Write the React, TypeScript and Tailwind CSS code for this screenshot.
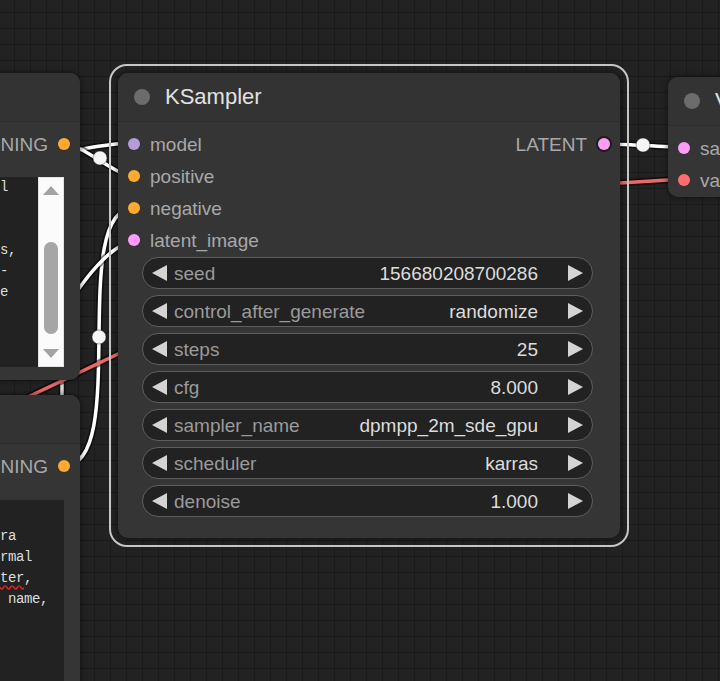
import React from "react"

const SANS = "font-['Liberation_Sans',Arial,sans-serif]"
const MONO = "font-['Liberation_Mono','DejaVu_Sans_Mono',monospace]"

type Slot = { label: string; dot: string }

const inputs: Slot[] = [
  { label: "model", dot: "bg-[#b39ddb]" },
  { label: "positive", dot: "bg-[#ffa931]" },
  { label: "negative", dot: "bg-[#ffa931]" },
  { label: "latent_image", dot: "bg-[#ff9cf9]" },
]

const widgets = [
  { label: "seed", value: "156680208700286" },
  { label: "control_after_generate", value: "randomize" },
  { label: "steps", value: "25" },
  { label: "cfg", value: "8.000" },
  { label: "sampler_name", value: "dpmpp_2m_sde_gpu" },
  { label: "scheduler", value: "karras" },
  { label: "denoise", value: "1.000" },
]

// links are drawn under the nodes, like the canvas does
const links = [
  { d: "M 40 158 C 80 150, 100 144, 134 143", color: "#ffffff" },
  { d: "M 64 144 C 83 144, 115 176, 134 176", color: "#ffffff" },
  { d: "M 64 466 C 131 466, 67 208, 134 208", color: "#ffffff" },
  { d: "M 30 360 C 60 320, 95 250, 134 240", color: "#ffffff" },
  { d: "M 62 366 L 62 410", color: "#d8d8d8" },
  { d: "M -20 420 L 118 354 C 300 270, 500 186, 620 183 L 684 179", color: "#ee6868" },
  { d: "M 604 144 C 624 144, 664 147, 684 147", color: "#ffffff" },
]

const midpoints = [
  [100, 158],
  [99, 337],
  [643, 145],
]

function Canvas() {
  return (
    <svg className="absolute inset-0" width="720" height="681">
      <defs>
        <pattern id="grid" x="14" y="12" width="16" height="16" patternUnits="userSpaceOnUse">
          <path d="M 0 0 L 16 0 M 0 0 L 0 16" stroke="#1a1a1a" strokeWidth="2" fill="none" />
        </pattern>
      </defs>
      <rect width="720" height="681" fill="#222222" />
      <rect width="720" height="681" fill="url(#grid)" />
      {links.map((l, i) => (
        <g key={i}>
          <path d={l.d} stroke="#000" strokeOpacity="0.5" strokeWidth="7" fill="none" />
          <path d={l.d} stroke={l.color} strokeWidth="3.5" fill="none" />
        </g>
      ))}
      {midpoints.map(([x, y], i) => (
        <circle key={i} cx={x} cy={y} r="7" fill="#f5f5f5" stroke="#000" strokeOpacity="0.35" strokeWidth="1" />
      ))}
    </svg>
  )
}

function ArrowLeft() {
  return (
    <svg width="15" height="16" viewBox="0 0 15 16" className="shrink-0">
      <path d="M15 0 L15 16 L0 8 Z" fill="#d4d4d4" />
    </svg>
  )
}

function ArrowRight() {
  return (
    <svg width="15" height="16" viewBox="0 0 15 16" className="shrink-0">
      <path d="M0 0 L0 16 L15 8 Z" fill="#d4d4d4" />
    </svg>
  )
}

function Widget({ label, value }: { label: string; value: string }) {
  return (
    <div className="h-8 rounded-full border border-[#5e5e5e] bg-[#222] flex items-center pl-[9px] pr-[9px] text-[19px] leading-none">
      <ArrowLeft />
      <span className="ml-[7px] text-[#9a9a9a]">{label}</span>
      <span className="flex-1" />
      <span className="text-[#dcdcdc]">{value}</span>
      <span className="w-[30px]" />
      <ArrowRight />
    </div>
  )
}

function TitleBar({ title }: { title: string }) {
  return (
    <div className="h-[49px] shrink-0 flex items-center pl-4 bg-[#333] border-b border-[#2c2c2c] rounded-t-[10px]">
      <span className="w-4 h-4 rounded-full bg-[#6c6c6c]" />
      <span className="ml-[15px] text-[22px] leading-none text-[#e2e2e2] whitespace-nowrap">{title}</span>
    </div>
  )
}

function KSampler() {
  return (
    <div className="absolute left-[109px] top-[64px] w-[520px] h-[483px] rounded-[18px] border-2 border-[#c6c6c6] p-[7px]">
      <div className="h-full rounded-[10px] bg-[#353535] flex flex-col shadow-[0_0_6px_rgba(0,0,0,0.6)]">
        <TitleBar title="KSampler" />
        <div className="pt-[6px] flex justify-between text-[19px] leading-none">
          <div className="flex flex-col">
            {inputs.map((s) => (
              <div key={s.label} className="h-8 flex items-center pl-[10px] gap-[10px]">
                <span className={`w-3 h-3 rounded-full ${s.dot}`} />
                <span className="text-[#a8a8a8]">{s.label}</span>
              </div>
            ))}
          </div>
          <div className="flex flex-col">
            <div className="h-8 flex items-center pr-[10px] gap-[11px]">
              <span className="text-[#a8a8a8]">LATENT</span>
              <span className="w-3 h-3 rounded-full bg-[#ff9cf9] ring-2 ring-[#1e1e1e]" />
            </div>
          </div>
        </div>
        <div className="pt-px pl-6 pr-[27px] flex flex-col gap-[6px]">
          {widgets.map((w) => (
            <Widget key={w.label} label={w.label} value={w.value} />
          ))}
        </div>
      </div>
    </div>
  )
}

function Output({ label }: { label: string }) {
  return (
    <div className="pt-[6px]">
      <div className="h-8 flex items-center justify-end pr-[10px] gap-[10px] text-[19px] leading-none">
        <span className="text-[#a8a8a8]">{label}</span>
        <span className="w-3 h-3 rounded-full bg-[#ffa931]" />
      </div>
    </div>
  )
}

const upperLines = [
  { t: "1girl", cls: "pr-[30px]" },
  { t: "", cls: "" },
  { t: "", cls: "" },
  { t: "flowers,", cls: "pr-[22px]" },
  { t: "semi-", cls: "pr-[30px]" },
  { t: "blue", cls: "pr-[30px]" },
  { t: "", cls: "" },
  { t: "", cls: "" },
  { t: "", cls: "" },
]

function UpperPrompt() {
  return (
    <div className="absolute left-[-400px] top-[73px] w-[480px] h-[307px] rounded-[10px] bg-[#353535] flex flex-col shadow-[0_0_6px_rgba(0,0,0,0.6)]">
      <TitleBar title="CLIP Text Encode (Prompt)" />
      <Output label="CONDITIONING" />
      <div className="mt-[17px] ml-[10px] mr-4 h-[190px] bg-[#222] flex">
        <div className={`flex-1 overflow-hidden ${MONO} text-[14px] tracking-[-0.4px] leading-[21px] text-[#dedede]`}>
          {upperLines.map((l, i) => (
            <div key={i} className={`h-[21px] whitespace-pre text-right ${l.cls}`}>
              {l.t}
            </div>
          ))}
        </div>
        <div className="w-[26px] bg-[#fbfbfb] border border-[#e2e2e2] flex flex-col items-center pt-[8px] pb-[8px]">
          <svg width="16" height="9" viewBox="0 0 16 9">
            <path d="M8 0 L16 9 L0 9 Z" fill="#a3a3a3" />
          </svg>
          <div className="mt-[47px] w-[14px] h-[92px] rounded-full bg-[#a6a6a6]" />
          <span className="flex-1" />
          <svg width="16" height="9" viewBox="0 0 16 9">
            <path d="M0 0 L16 0 L8 9 Z" fill="#a3a3a3" />
          </svg>
        </div>
      </div>
    </div>
  )
}

function LowerPrompt() {
  return (
    <div className="absolute left-[-400px] top-[395px] w-[480px] h-[320px] rounded-t-[10px] bg-[#353535] flex flex-col shadow-[0_0_6px_rgba(0,0,0,0.6)]">
      <TitleBar title="CLIP Text Encode (Prompt)" />
      <Output label="CONDITIONING" />
      <div className={`mt-[18px] ml-[10px] mr-4 flex-1 bg-[#222] pt-[5px] overflow-hidden ${MONO} text-[14px] tracking-[-0.4px] leading-[21px] text-[#dedede]`}>
        <div className="h-[21px]" />
        <div className="h-[21px] whitespace-pre text-right pr-[48px]">extra</div>
        <div className="h-[21px] whitespace-pre text-right pr-[32px]">normal</div>
        <div className="h-[21px] whitespace-pre text-right pr-[32px]">
          twit
          <span className="underline decoration-wavy decoration-[#e02828] underline-offset-[3px]">ter</span>,
        </div>
        <div className="h-[21px] whitespace-pre text-right pr-[16px]">artist name,</div>
      </div>
    </div>
  )
}

function VaeDecode() {
  return (
    <div className="absolute left-[668px] top-[77px] w-[240px] h-[120px] rounded-[10px] bg-[#353535] flex flex-col shadow-[0_0_6px_rgba(0,0,0,0.6)]">
      <TitleBar title="VAE Decode" />
      <div className="pt-[6px] flex flex-col text-[19px] leading-none">
        <div className="h-8 flex items-center pl-[10px] gap-[10px]">
          <span className="w-3 h-3 rounded-full bg-[#ff9cf9]" />
          <span className="text-[#a8a8a8]">samples</span>
        </div>
        <div className="h-8 flex items-center pl-[10px] gap-[10px]">
          <span className="w-3 h-3 rounded-full bg-[#ff6e6e]" />
          <span className="text-[#a8a8a8]">vae</span>
        </div>
      </div>
    </div>
  )
}

export default function App() {
  return (
    <div className={`relative w-[720px] h-[681px] overflow-hidden bg-[#222] ${SANS}`}>
      <Canvas />
      <UpperPrompt />
      <LowerPrompt />
      <KSampler />
      <VaeDecode />
    </div>
  )
}
